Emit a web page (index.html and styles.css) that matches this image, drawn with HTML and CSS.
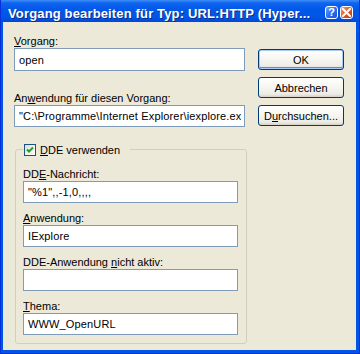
FILE: index.html
```html
<!DOCTYPE html>
<html lang="de">
<head>
  <meta charset="UTF-8">
  <title>Vorgang bearbeiten</title>
  <link rel="stylesheet" href="styles.css">
</head>
<body>

<div class="window">
  <div class="titlebar">
    <span class="title">Vorgang bearbeiten für Typ: URL:HTTP (Hyper...</span>
    <div class="caption-buttons">
      <span class="cap-btn help">?</span>
      <span class="cap-btn close">
        <svg width="9" height="9" viewBox="0 0 9 9"><path d="M1 1 L8 8 M8 1 L1 8" stroke="#fff" stroke-width="2" stroke-linecap="square"/></svg>
      </span>
    </div>
  </div>

  <div class="client">
    <div class="form">
      <label class="lbl"><u>V</u>organg:</label>
      <input class="txt first" type="text" value="open">

      <label class="lbl spaced">An<u>w</u>endung für diesen Vorgang:</label>
      <input class="txt" type="text" value='"C:\Programme\Internet Explorer\iexplore.exe'>

      <fieldset class="group">
        <legend>
          <span class="check">
            <svg width="10" height="10" viewBox="0 0 10 10"><path d="M2 4.5 L4 6.5 L8 2.5" fill="none" stroke="#21a121" stroke-width="2"/></svg>
          </span>
          <span><u>D</u>DE verwenden</span>
        </legend>

        <label class="lbl">DD<u>E</u>-Nachricht:</label>
        <input class="txt" type="text" value='"%1",,-1,0,,,,'>

        <label class="lbl"><u>A</u>nwendung:</label>
        <input class="txt" type="text" value="IExplore">

        <label class="lbl">DDE-Anwendung <u>n</u>icht aktiv:</label>
        <input class="txt" type="text" value="">

        <label class="lbl"><u>T</u>hema:</label>
        <input class="txt" type="text" value="WWW_OpenURL">
      </fieldset>
    </div>

    <div class="buttons">
      <button class="btn default">OK</button>
      <button class="btn">Abbrechen</button>
      <button class="btn">D<u>u</u>rchsuchen...</button>
    </div>
  </div>
</div>

</body>
</html>
```

FILE: styles.css
```css
html, body {
  margin: 0;
  padding: 0;
  background: #ffffff;
}

body {
  font-family: 'Liberation Sans', Arial, sans-serif;
  font-size: 11px;
  color: #000;
}

.window {
  width: 360px;
  height: 354px;
  box-sizing: border-box;
  display: flex;
  flex-direction: column;
  background: #0055e5;
  border-left: 1px solid #0831d9;
  border-right: 1px solid #0831d9;
  border-bottom: 1px solid #0831d9;
}

.titlebar {
  height: 22px;
  display: flex;
  align-items: center;
  justify-content: space-between;
  padding: 3px 6px 0 7px;
  box-sizing: border-box;
  background: linear-gradient(to bottom, #3d8ff8 0%, #0f63ee 14%, #0058e8 45%, #0055e5 80%, #0047d8 100%);
}

.title {
  color: #fff;
  font-weight: bold;
  font-size: 13px;
  line-height: 15px;
  letter-spacing: 0.15px;
  text-shadow: 1px 1px 0 #0a2a8f;
  white-space: nowrap;
  margin-top: 2px;
}

.caption-buttons {
  display: flex;
  gap: 2px;
}

.cap-btn {
  width: 13px;
  height: 13px;
  box-sizing: border-box;
  border: 1px solid #fff;
  border-radius: 3px;
  display: flex;
  align-items: center;
  justify-content: center;
  color: #fff;
  font-weight: bold;
  font-size: 11px;
  line-height: 11px;
}

.help {
  background: linear-gradient(135deg, #6ea3fb 0%, #2c6ff0 50%, #1a55d8 100%);
}

.close {
  background: linear-gradient(135deg, #f0a080 0%, #df5a2c 50%, #c2380d 100%);
}

.close svg {
  display: block;
}

.client {
  flex: 1;
  margin: 0 3px 3px 2px;
  background: #ece9d8;
  display: grid;
  grid-template-columns: 231px 86px;
  column-gap: 13px;
  align-items: start;
  padding: 12px 0 0 11px;
}

.form {
  display: flex;
  flex-direction: column;
}

.lbl {
  display: block;
  line-height: 14px;
  height: 14px;
  white-space: nowrap;
}

.spaced {
  margin-top: 20px;
}

.txt {
  display: block;
  height: 22px;
  box-sizing: border-box;
  margin: 0;
  padding: 0 3px 0 4px;
  border: 1px solid #7f9db9;
  background: #fff;
  font-family: 'Liberation Sans', Arial, sans-serif;
  font-size: 11px;
  letter-spacing: 0.15px;
  color: #000;
  outline: none;
}

.txt.first {
  height: 23px;
}

.group {
  margin: 16px 0 0 1px;
  width: 232px;
  box-sizing: border-box;
  padding: 11px 8px 8px 7px;
  border: 1px solid #d0d0bf;
  border-radius: 3px;
  display: flex;
  flex-direction: column;
}

.group .txt {
  width: 215px;
  margin-bottom: 8px;
}

.group .txt:last-child {
  margin-bottom: 0;
}

.group legend {
  display: flex;
  align-items: center;
  gap: 4px;
  height: 13px;
  padding: 0 10px 0 1px;
  margin-left: 0;
}

.check {
  width: 12px;
  height: 12px;
  box-sizing: border-box;
  border: 1px solid #1c5180;
  background: linear-gradient(135deg, #dcdcd7 0%, #f4f4f0 60%, #ffffff 100%);
  display: flex;
  align-items: center;
  justify-content: center;
}

.check svg {
  display: block;
}

.buttons {
  display: flex;
  flex-direction: column;
  gap: 7px;
  margin-top: 15px;
}

.btn {
  height: 21px;
  width: 86px;
  box-sizing: border-box;
  border: 1px solid #003c74;
  border-radius: 3px;
  background: linear-gradient(to bottom, #ffffff 0%, #f6f5f0 50%, #ecebe6 85%, #d6d0c5 100%);
  font-family: 'Liberation Sans', Arial, sans-serif;
  font-size: 11px;
  color: #000;
  padding: 0;
  cursor: pointer;
}

.btn.default {
  box-shadow: inset 0 0 0 1px #aacbf7, inset 0 -1px 0 1px #6982ee;
}
```
